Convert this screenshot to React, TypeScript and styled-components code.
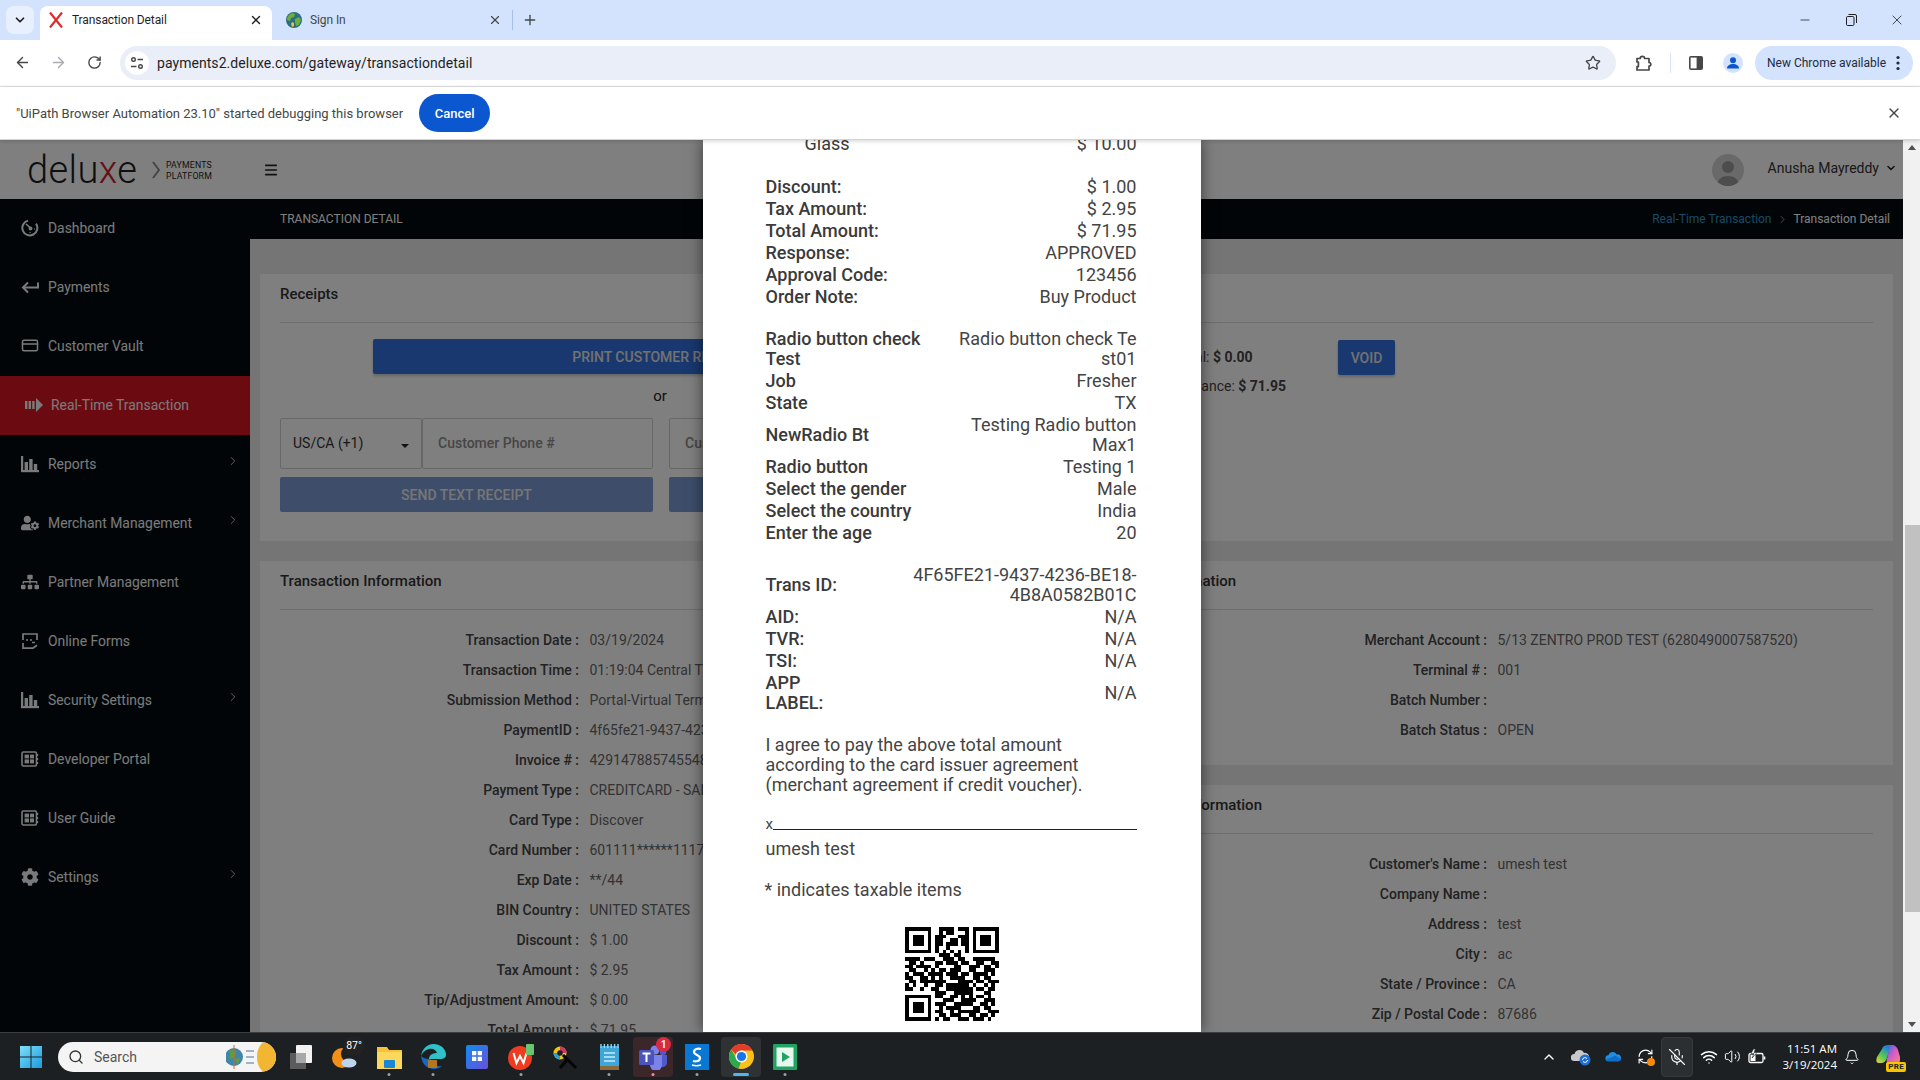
import React from "react";
import styled, { createGlobalStyle } from "styled-components";
import {
  ArrowLeft, ArrowRight, RotateCw, Star, X, Plus, ChevronDown, Minus, ChevronRight, ChevronUp,
  CreditCard, Search, Wifi, Volume2, Bell, MicOff, RefreshCw, Menu,
} from "lucide-react";
import { FaUserCog, FaSitemap, FaCog } from "react-icons/fa";

const Global = createGlobalStyle`
  html, body { margin: 0; padding: 0; overflow: hidden; background: #fff; }
  * { box-sizing: border-box; }
  body { font-family: Roboto, "Liberation Sans", sans-serif; }
`;

const Shell = styled.div`display:flex;flex-direction:column;width:1920px;height:1080px;overflow:hidden;`;

/* ---------- browser chrome ---------- */
const TabStrip = styled.div`display:flex;align-items:flex-end;height:40px;background:#d3e3fd;padding-left:6px;flex:none;`;
const TabMenu = styled.div`display:flex;align-items:center;justify-content:center;width:28px;height:28px;margin:0 6px 6px 0;border-radius:8px;background:#e9f0fd;color:#1f1f1f;`;
const Tab = styled.div<{ $active?: boolean; $w: number }>`
  display:flex;align-items:center;width:${p => p.$w}px;height:34px;border-radius:8px 8px 0 0;
  padding:${p => (p.$active ? "0 9px 6px 8px" : "0 10px 6px 14px")};
  background:${p => (p.$active ? "#fff" : "transparent")};color:${p => (p.$active ? "#1f1f1f" : "#444746")};
`;
const TabTitle = styled.span`flex:1;margin-left:8px;font-size:12px;letter-spacing:-.1px;white-space:nowrap;`;
const TabSep = styled.div`width:1px;height:20px;background:#a8c0e8;margin-bottom:10px;`;
const NewTab = styled.div`display:flex;margin:0 0 12px 9px;color:#444746;`;
const WinControls = styled.div`display:flex;margin-left:auto;align-self:flex-start;`;
const WinBtn = styled.div`display:flex;align-items:center;justify-content:center;width:46px;height:40px;color:#1f1f1f;`;

const Toolbar = styled.div`display:flex;align-items:center;height:47px;padding:0 0 1px 4px;background:#fff;border-bottom:1px solid #e0e0e0;flex:none;`;
const ToolBtn = styled.div<{ $ml?: number; $muted?: boolean }>`
  display:flex;align-items:center;justify-content:center;width:36px;height:34px;flex:none;
  margin-left:${p => p.$ml ?? 0}px;color:${p => (p.$muted ? "#a8abaf" : "#474747")};
`;
const Omnibox = styled.div`display:flex;align-items:center;width:1496px;height:34px;margin-left:8px;padding:0 15px 0 5px;border-radius:17px;background:#e9eef8;flex:none;`;
const SiteChip = styled.div`display:flex;align-items:center;justify-content:center;width:24px;height:24px;border-radius:50%;background:#fff;color:#474747;`;
const Url = styled.span`margin-left:8px;font-size:14px;color:#1f1f1f;letter-spacing:.05px;`;
const OmniStar = styled.div`display:flex;margin-left:auto;color:#474747;`;
const ToolSep = styled.div`width:1px;height:20px;margin-left:9px;background:#d3e3fd;flex:none;`;
const UpdatePill = styled.div`display:flex;align-items:center;width:158px;height:34px;margin-left:4px;padding-left:12px;border-radius:17px;background:#d3e3fd;color:#1c2b41;font-size:12px;flex:none;`;
const PillDots = styled.div`display:flex;margin-left:auto;margin-right:13px;color:#1c2b41;`;

const Infobar = styled.div`position:relative;z-index:2;display:flex;align-items:center;height:53px;padding:0 18px 0 16px;background:#fff;border-bottom:1px solid #d4d4d4;box-shadow:0 1px 4px rgba(0,0,0,.18);color:#444746;font-size:13px;flex:none;`;
const CancelBtn = styled.div`display:flex;align-items:center;justify-content:center;width:71px;height:38px;margin-left:16px;border-radius:19px;background:#0b57d0;color:#fff;font-size:13px;font-weight:500;`;
const InfoClose = styled.div`display:flex;margin-left:auto;color:#444746;`;

/* ---------- page ---------- */
const Viewport = styled.div`display:flex;flex:1;min-height:0;`;
const Page = styled.div`position:relative;flex:1;min-width:0;display:flex;flex-direction:column;overflow:hidden;background:#fff;`;
const Scrollbar = styled.div`display:flex;flex-direction:column;align-items:center;width:17px;background:#f1f1f1;flex:none;`;
const ScrollArrow = styled.div<{ $down?: boolean }>`
  width:0;height:0;margin:5px 0;border-left:4px solid transparent;border-right:4px solid transparent;
  ${p => (p.$down ? "border-top:5px solid #505050;" : "border-bottom:5px solid #505050;")}
`;
const ScrollGap = styled.div`flex:1;width:100%;display:flex;flex-direction:column;justify-content:flex-end;padding-bottom:105px;align-items:flex-end;`;
const ScrollThumb = styled.div`width:15px;height:387px;background:#c1c1c1;`;

const Header = styled.div`display:flex;align-items:center;height:59px;padding:0 6px 0 27px;background:#fff;flex:none;`;
const LogoBlock = styled.div`display:flex;align-items:center;width:236px;flex:none;`;
const LogoText = styled.span`font-size:38px;font-weight:300;line-height:1;color:#1f1f1f;letter-spacing:.4px;width:111px;`;
const LogoX = styled.span`color:#c9202a;`;
const LogoChevron = styled.svg`margin-left:14px;flex:none;`;
const LogoSub = styled.div`margin-left:6px;font-size:9.5px;line-height:11px;color:#1f1f1f;letter-spacing:.2px;transform:scaleX(.92);transform-origin:left;`;
const Burger = styled.div`display:flex;color:#222;`;
const Avatar = styled.div`display:flex;align-items:flex-end;justify-content:center;width:32px;height:32px;margin-left:auto;border-radius:50%;background:#d3d3d3;color:#9a9a9a;overflow:hidden;`;
const UserName = styled.span`margin:0 0 3px 24px;font-size:14px;color:#333;`;
const UserCaret = styled.div`display:flex;margin:0 0 3px 6px;color:#222;`;

const Body = styled.div`display:flex;flex:1;min-height:0;`;
const Sidebar = styled.div`width:250px;background:#020a0e;flex:none;`;
const NavItem = styled.div<{ $active?: boolean }>`
  display:flex;align-items:center;height:59px;gap:${p => (p.$active ? 8 : 9)}px;
  padding:0 10px 2px ${p => (p.$active ? 25 : 21)}px;
  background:${p => (p.$active ? "#d81424" : "transparent")};color:#f5f5f5;font-size:13.9px;
`;
const NavIcon = styled.span`display:flex;align-items:center;justify-content:center;width:18px;height:18px;flex:none;`;
const NavArrow = styled.span`display:flex;margin-left:auto;margin-bottom:6px;`;

const Main = styled.div`flex:1;min-width:0;display:flex;flex-direction:column;`;
const SubBar = styled.div`display:flex;align-items:center;justify-content:space-between;height:40px;padding:0 13px 0 30px;background:#020a0e;color:#fff;font-size:12px;flex:none;`;
const SubTitle = styled.span`font-weight:400;`;
const Crumbs = styled.div`display:flex;align-items:center;gap:4.5px;`;
const CrumbLink = styled.span`color:#3394cc;`;
const CrumbArrow = styled.span`display:flex;color:#c8c8c8;`;
const Content = styled.div`flex:1;min-height:0;overflow:hidden;padding:35px 10px 0;background:#ebebeb;`;
const Panel = styled.section<{ $h?: number }>`background:#fff;${p => (p.$h ? `height:${p.$h}px;` : "")}`;
const PanelTitle = styled.h3`display:flex;align-items:center;height:49px;margin:0 20px;padding-bottom:9px;border-bottom:1px solid #dcdcdc;font-size:15px;font-weight:500;color:#333;white-space:nowrap;`;
const ReceiptBody = styled.div`display:flex;padding:0 20px;`;
const ReceiptLeft = styled.div`display:flex;flex-direction:column;align-items:center;width:760px;padding-top:16px;flex:none;`;
const PrintBtn = styled.div<{ $w: number }>`
  display:flex;align-items:center;justify-content:center;width:${p => p.$w}px;height:35px;border-radius:2px;
  background:#3070de;color:#e4e4e4;font-size:14px;font-weight:500;box-shadow:0 2px 3px rgba(0,0,0,.2);flex:none;
`;
const OrText = styled.div`height:44px;line-height:44px;font-size:15px;color:#222;`;
const FormGrid = styled.div`display:grid;grid-template-columns:373px 371px;column-gap:16px;row-gap:8px;width:100%;`;
const Phone = styled.div`display:flex;height:51px;`;
const CountrySelect = styled.div`display:flex;align-items:center;justify-content:space-between;width:142px;padding:0 12px 2px 12px;border:1px solid #cfcfcf;border-radius:2px;font-size:14px;color:#333;flex:none;`;
const Caret = styled.span`width:0;height:0;margin-top:7px;border-left:4px solid transparent;border-right:4px solid transparent;border-top:4px solid #222;`;
const TextField = styled.input`flex:1;min-width:0;width:100%;height:51px;padding:0 15px 2px;border:1px solid #cfcfcf;border-radius:2px;background:transparent;font:500 14px Roboto,sans-serif;outline:none;&::placeholder{color:#8c8c8c;opacity:1;}`;
const SendBtn = styled.div`display:flex;align-items:center;justify-content:center;height:35px;border-radius:2px;background:#7b9bd4;color:#ececec;font-size:14px;font-weight:500;`;
const Amounts = styled.div`display:flex;flex-direction:column;gap:9px;width:226px;margin-left:72px;padding-top:24px;flex:none;font-size:14px;color:#444;white-space:nowrap;`;
const AmountRow = styled.div`height:20px;line-height:20px;`;
const VoidBtn = styled(PrintBtn)`margin-top:17px;`;

const Columns = styled.div`display:flex;align-items:flex-start;gap:4px;margin-top:20px;`;
const LeftPanel = styled(Panel)`width:806px;flex:none;height:600px;`;
const RightStack = styled.div`display:flex;flex-direction:column;gap:20px;flex:1;min-width:0;`;
const RightPanel = styled(Panel)`padding-bottom:20px;`;
const Rows = styled.div<{ $label: number }>`
  display:grid;grid-template-columns:${p => p.$label}px 1fr;column-gap:10.5px;grid-auto-rows:30px;
  padding:15px 20px 0;align-items:center;font-size:14px;white-space:nowrap;
`;
const Lbl = styled.div`text-align:right;font-weight:500;color:#444;`;
const Val = styled.div`color:#666;`;

const Backdrop = styled.div`position:absolute;inset:0;display:flex;justify-content:center;background:rgba(0,0,0,.5);z-index:1;`;
const Modal = styled.div`width:498px;height:100%;padding:0 64px 0 63px;overflow:hidden;background:#fff;box-shadow:0 0 14px rgba(0,0,0,.55);color:#3c3c3c;font-size:18px;line-height:20px;`;
const ReceiptTable = styled.div<{ $mt?: number }>`
  display:grid;grid-template-columns:1fr auto;align-items:center;row-gap:2px;margin-top:${p => p.$mt ?? 0}px;
`;
const RLabel = styled.div<{ $indent?: boolean }>`font-weight:500;color:#3a3a3a;white-space:nowrap;${p => (p.$indent ? "padding-left:39px;font-weight:400;" : "")}`;
const RValue = styled.div`text-align:right;color:#444;white-space:nowrap;`;
const Agree = styled.div`margin-top:22px;color:#444;white-space:nowrap;`;
const SignLine = styled.div`display:flex;align-items:flex-end;height:20px;margin-top:16px;font-size:15px;line-height:13px;color:#444;`;
const SignRule = styled.span`flex:1;height:1px;margin-bottom:1px;background:#222;`;
const Signer = styled.div`margin-top:8px;color:#444;`;
const Taxable = styled.div`margin-top:21px;margin-left:-1px;color:#444;`;
const QrWrap = styled.div`display:flex;justify-content:center;margin-top:27px;padding-left:2px;`;

/* ---------- taskbar ---------- */
const Taskbar = styled.div`display:flex;align-items:center;height:48px;padding:0 14px 0 9px;background:#1c2022;border-top:1px solid #3b3f42;flex:none;`;
const TaskCell = styled.div<{ $bg?: string }>`
  position:relative;display:flex;align-items:center;justify-content:center;width:40px;height:40px;margin:0 2px;
  border-radius:4px;background:${p => p.$bg ?? "transparent"};flex:none;
`;
const TaskDot = styled.span<{ $color?: string; $wide?: boolean }>`
  position:absolute;left:50%;bottom:1px;transform:translateX(-50%);height:3px;border-radius:2px;
  width:${p => (p.$wide ? 16 : 3)}px;background:${p => p.$color ?? "#9aa0a6"};
`;
const SearchBox = styled.div`display:flex;align-items:center;width:218px;height:30px;margin:0 3px 0 5px;padding-left:10px;border-radius:15px;background:#f4f4f4;color:#333;font-size:14px;flex:none;overflow:hidden;`;
const SearchText = styled.span`margin-left:10px;color:#555;`;
const SearchArt = styled.svg`margin-left:auto;flex:none;`;
const WeatherBadge = styled.span`position:absolute;top:-1px;right:0;width:22px;height:20px;border-radius:10px;background:#222;color:#fff;font-size:10.5px;line-height:20px;text-align:center;`;
const TeamsBadge = styled.span`position:absolute;top:0;right:2px;width:15px;height:15px;border-radius:50%;background:#d92b40;color:#fff;font-size:10px;font-weight:700;line-height:15px;text-align:center;`;
const Tray = styled.div`display:flex;align-items:center;margin-left:auto;color:#fff;`;
const TrayCell = styled.div<{ $w: number; $box?: boolean; $ml?: number }>`
  position:relative;display:flex;align-items:center;justify-content:center;width:${p => p.$w}px;height:40px;flex:none;
  margin-left:${p => p.$ml ?? 0}px;
  ${p => (p.$box ? "background:#2b2f31;border:1px solid #363a3c;border-radius:4px;" : "")}
  svg { flex:none; }
`;
const SyncDot = styled.span`position:absolute;right:6px;bottom:11px;width:8px;height:8px;border-radius:50%;background:#f7890c;`;
const Clock = styled.div`width:62px;text-align:right;font-family:"Open Sans",Roboto,sans-serif;font-size:11.5px;line-height:16px;color:#fff;white-space:nowrap;`;
const CopilotBadge = styled.span`position:absolute;right:0;bottom:5px;padding:0 2px;border-radius:2px;background:#f7c600;color:#222;font-size:8px;font-weight:700;line-height:10px;letter-spacing:.3px;`;

/* ---------- drawings ---------- */
const RedX = () => (
  <svg width="16" height="16" viewBox="0 0 16 16" fill="none" stroke="#e02b2b" strokeWidth="2.2"><path d="M2 0.5 14 15.5M14 0.5 2 15.5" /></svg>
);
const Globe = () => (
  <svg width="16" height="16" viewBox="0 0 16 16">
    <circle cx="8" cy="8" r="8" fill="#2c6e7f" />
    <path d="M3 3c2-2 5-2 6-1L8 5 5 6 4 9 1 8c0-2 1-4 2-5ZM9 7l4-2 2 3-2 5-3 1-1-4Z" fill="#6fae3c" />
    <path d="M6 10l2 1v3l-2 1-1-3Z" fill="#e2c14a" />
  </svg>
);
const Tune = () => (
  <svg width="14" height="14" viewBox="0 0 14 14" fill="none" stroke="currentColor" strokeWidth="1.4">
    <circle cx="3.5" cy="3.5" r="1.8" /><path d="M7.5 3.5H13M1 10.5h5.5" /><circle cx="10.5" cy="10.5" r="1.8" />
  </svg>
);
const PuzzleIcon = () => (
  <svg width="18" height="18" viewBox="0 0 18 18" fill="none" stroke="currentColor" strokeWidth="1.7" strokeLinejoin="round">
    <path d="M3 4.5h3.2a2.2 2.2 0 0 1 4.4 0H15v4a1.8 1.8 0 0 1 0 3.6V16H3v-3.4h1.4V8H3Z" />
  </svg>
);
const SidePanel = () => (
  <svg width="16" height="16" viewBox="0 0 16 16"><rect x="1" y="1" width="14" height="14" rx="2" fill="#474747" /><rect x="2.6" y="2.6" width="6" height="10.8" fill="#fff" /></svg>
);
const Profile = () => (
  <svg width="20" height="20" viewBox="0 0 20 20"><circle cx="10" cy="10" r="10" fill="#d3e3fd" /><circle cx="10" cy="7.2" r="3" fill="#0b57d0" /><path d="M4 15.5c0-3 2.8-4.5 6-4.5s6 1.5 6 4.5Z" fill="#0b57d0" /></svg>
);
const Dots = () => (
  <svg width="4" height="16" viewBox="0 0 4 16" fill="currentColor"><circle cx="2" cy="2.5" r="1.6" /><circle cx="2" cy="8" r="1.6" /><circle cx="2" cy="13.5" r="1.6" /></svg>
);
const Restore = () => (
  <svg width="11" height="12" viewBox="0 0 11 12" fill="none" stroke="currentColor"><rect x=".5" y="2.5" width="7.5" height="9" rx="1.2" /><path d="M2.5 .5H9a1.5 1.5 0 0 1 1.5 1.5v7" /></svg>
);
const UserSil = () => (
  <svg width="24" height="28" viewBox="0 0 24 28" fill="currentColor"><circle cx="12" cy="9" r="6" /><path d="M1 28c0-7 5-10 11-10s11 3 11 10Z" /></svg>
);

const IcoDash = () => (
  <svg width="18" height="18" viewBox="0 0 18 18" fill="none" stroke="currentColor" strokeWidth="2"><path d="M7 1.6A7.5 7.5 0 1 0 15 4.6" /><path d="M5 5l4.5 4" strokeWidth="1.6" /><circle cx="9.5" cy="9.5" r="1" fill="currentColor" /><path d="M9 13v1M13 10h1" strokeWidth="1.2" /></svg>
);
const IcoPay = () => (
  <svg width="18" height="18" viewBox="0 0 18 18" fill="none" stroke="currentColor" strokeWidth="2"><path d="M17 4.5V9.5H3" /><path d="M7 4.5 2 9.5l5 5" /></svg>
);
const IcoRealtime = () => (
  <svg width="18" height="14" viewBox="0 0 18 14" fill="currentColor"><rect x="0" y="3" width="2.4" height="8" /><rect x="3.6" y="3" width="2.4" height="8" /><rect x="7.2" y="3" width="2.4" height="8" /><path d="M11 0 18 7l-7 7Z" /></svg>
);
const IcoBars = () => (
  <svg width="18" height="18" viewBox="0 0 18 18" fill="currentColor"><rect x="0" y="1" width="2.2" height="16" /><rect x="0" y="15" width="18" height="2.2" /><rect x="3.6" y="7" width="3.4" height="9" /><rect x="8.2" y="4" width="3.4" height="12" /><rect x="12.8" y="9" width="3.4" height="7" /></svg>
);
const IcoForms = () => (
  <svg width="18" height="18" viewBox="0 0 18 18" fill="none" stroke="currentColor" strokeWidth="1.7"><path d="M2 8V2h14v6M2 11v5.2h10l4-3" /><path d="M5 8h2M9 8h2M11 10.5h3" /></svg>
);
const IcoDev = () => (
  <svg width="18" height="16" viewBox="0 0 18 16" fill="none" stroke="currentColor"><rect x="1" y="1" width="14.5" height="14" rx="1.5" strokeWidth="1.6" /><rect x="3.6" y="3.6" width="4.4" height="3.8" fill="currentColor" stroke="none" /><rect x="9" y="3.6" width="4" height="3.8" fill="currentColor" stroke="none" /><rect x="3.6" y="8.4" width="4.4" height="4" fill="currentColor" stroke="none" /><rect x="9" y="8.4" width="4" height="4" fill="currentColor" stroke="none" /><path d="M16.5 3v2M16.5 7v2M16.5 11v2" strokeWidth="1.4" /></svg>
);

const WinLogo = () => (
  <svg width="24" height="24" viewBox="0 0 24 24">
    <defs><linearGradient id="wl" x1="0" y1="0" x2="1" y2="1"><stop offset="0" stopColor="#7fe0f7" /><stop offset="1" stopColor="#1a9ae0" /></linearGradient></defs>
    <path d="M1 1h10.5v10.5H1zM12.5 1H23v10.5H12.5zM1 12.5h10.5V23H1zM12.5 12.5H23V23H12.5z" fill="url(#wl)" />
  </svg>
);
const TaskView = () => (
  <svg width="26" height="24" viewBox="0 0 26 24"><rect x="2" y="8" width="16" height="16" fill="#5c5c5c" /><rect x="8" y="0" width="16" height="18" rx="1" fill="#f2f2f2" /><rect x="8" y="8" width="10" height="10" fill="#a8a8a8" /></svg>
);
const Weather = () => (
  <svg width="30" height="30" viewBox="0 0 30 30"><circle cx="12" cy="16" r="10" fill="#f39019" /><circle cx="19" cy="12" r="8" fill="#1c2022" /><ellipse cx="19" cy="21" rx="7.5" ry="4.5" fill="#bcd4ee" /></svg>
);
const Explorer = () => (
  <svg width="25" height="24" viewBox="0 0 25 24"><path d="M0 2h10l2 3h13v19H0Z" fill="#f6c338" /><rect x="0" y="7" width="25" height="17" fill="#fbd75c" /><rect x="7" y="15" width="11" height="8" rx="1" fill="#1b86d8" /></svg>
);
const Edge = () => (
  <svg width="25" height="25" viewBox="0 0 25 25">
    <path d="M12.5 0C20 0 25 5 25 11c0 3-3 4-6 4H8c0-4 4-6 8-6-1-3-4-5-8-4-4 1-7 4-8 7C1 5 6 0 12.5 0Z" fill="#2fc0c9" />
    <path d="M0 12c1 8 6 13 13 13 3 0 6-1 8-3-6 1-11-2-11-7H8C5 15 2 14 0 12Z" fill="#1768c4" />
    <rect x="7" y="16" width="9" height="8" rx="1" fill="#b4761f" />
  </svg>
);
const StoreTile = () => (
  <svg width="22" height="24" viewBox="0 0 22 24"><defs><linearGradient id="st" x1="0" y1="0" x2="1" y2="1"><stop offset="0" stopColor="#0f8cf0" /><stop offset="1" stopColor="#6b4fd8" /></linearGradient></defs><rect width="22" height="24" rx="2" fill="url(#st)" /><path d="M6 6h4.3v4.3H6zM11.7 6H16v4.3h-4.3zM6 11.7h4.3V16H6zM11.7 11.7H16V16h-4.3z" fill="#fff" /></svg>
);
const Wps = () => (
  <svg width="26" height="26" viewBox="0 0 26 26"><circle cx="12" cy="14" r="12" fill="#ef3b1f" /><path d="M5.5 9l3 10 3.5-7 3.5 7 3-10" fill="none" stroke="#fff" strokeWidth="2" /><rect x="18" y="0" width="8" height="11" rx="1" fill="#69c56f" /></svg>
);
const Picker = () => (
  <svg width="26" height="26" viewBox="0 0 26 26"><circle cx="8" cy="9" r="6.5" fill="#f0c419" /><path d="M8 2.5A6.5 6.5 0 0 1 14.5 9H8Z" fill="#d6336c" /><path d="M1.5 9A6.5 6.5 0 0 0 8 15.5V9Z" fill="#2b9fd8" /><circle cx="8" cy="9" r="2.8" fill="#1c2022" /><path d="M11 11 24 24M8 24l8-9" stroke="#050505" strokeWidth="3" /></svg>
);
const Notepad = () => (
  <svg width="19" height="26" viewBox="0 0 19 26"><rect y="2" width="19" height="24" rx="2" fill="#3fa7d8" /><path d="M1 0v4M4.4 0v4M7.8 0v4M11.2 0v4M14.6 0v4M18 0v4" stroke="#9bd4ee" strokeWidth="1.4" /><path d="M4 9h11M4 13h11M4 17h11" stroke="#c9ecfb" strokeWidth="1.5" /><rect y="22" width="19" height="4" fill="#8b6a3e" /></svg>
);
const Teams = () => (
  <svg width="30" height="26" viewBox="0 0 30 26"><circle cx="17" cy="6" r="4.5" fill="#7b83eb" /><circle cx="25" cy="8" r="3.2" fill="#5059c9" /><path d="M20 11h9v8a5 5 0 0 1-9 2Z" fill="#5059c9" /><path d="M9 11h15v10a6 6 0 0 1-12 0Z" fill="#7b83eb" /><rect x="1" y="6" width="15" height="15" rx="1.5" fill="#4b53bc" /><path d="M4.5 9.5h8M8.5 9.5V18" stroke="#fff" strokeWidth="2" /></svg>
);
const BlueS = () => (
  <svg width="24" height="26" viewBox="0 0 24 26"><rect width="24" height="26" fill="#0a77d2" /><path d="M16 5c-3-1-7 0-7 3s6 3 6 6-4 4-7 3" fill="none" stroke="#fff" strokeWidth="2.3" /><path d="M7 21c3 1 6 1 9 0" stroke="#fff" strokeWidth="1.6" fill="none" /></svg>
);
const Chrome = () => (
  <svg width="25" height="25" viewBox="0 0 25 25"><circle cx="12.5" cy="12.5" r="12.5" fill="#fbc116" /><path d="M12.5 0A12.5 12.5 0 0 1 23.4 6.4H12.5A6 6 0 0 0 6.8 10.5L2.2 5.4A12.5 12.5 0 0 1 12.5 0Z" fill="#e33b2e" /><path d="M2.2 5.4 8 15.5A6 6 0 0 0 12 18.5L9.4 24.6A12.5 12.5 0 0 1 2.2 5.4Z" fill="#2da94f" /><circle cx="12.5" cy="12.5" r="6" fill="#fff" /><circle cx="12.5" cy="12.5" r="4.6" fill="#1a73e8" /></svg>
);
const GreenPlay = () => (
  <svg width="24" height="26" viewBox="0 0 24 26"><rect width="24" height="26" rx="1" fill="#1fa463" /><rect x="3.5" y="3.5" width="17" height="19" fill="#e9f8ef" /><path d="M9 8l8 5-8 5Z" fill="#1fa463" /></svg>
);
const CloudSync = () => (
  <svg width="20" height="18" viewBox="0 0 20 18"><path d="M3 13a3.5 3.5 0 0 1 .5-7 5 5 0 0 1 9.5-1 4 4 0 0 1 2 8Z" fill="#c9c9c9" /><circle cx="14" cy="12" r="5.5" fill="#1f6fd6" /><path d="M11.5 12a2.5 2.5 0 0 1 4.5-1.4M16.5 12a2.5 2.5 0 0 1-4.5 1.4" stroke="#fff" fill="none" /></svg>
);
const OneDrive = () => (
  <svg width="17" height="11" viewBox="0 0 24 16"><path d="M5 15a4.5 4.5 0 0 1-.5-9A6.5 6.5 0 0 1 16.5 5 5 5 0 0 1 19 15Z" fill="#1f8fe6" /><path d="M9 9.5 14 6.5l9 5A4 4 0 0 1 19 15H5a4 4 0 0 1-3.8-3Z" fill="#0f6cc8" /></svg>
);
const BatteryIcon = () => (
  <svg width="18" height="16" viewBox="0 0 18 16" fill="none" stroke="currentColor" strokeWidth="1.3"><rect x="1" y="4.5" width="14" height="9" rx="1.5" /><path d="M16.5 7.5v3" strokeWidth="1.6" /><path d="M2.5 6h5v6h-5Z" fill="currentColor" stroke="none" /><path d="M5.5 0 3 4.5h3L4 9l5-5.5H6L7.5 0Z" fill="currentColor" stroke="#1c2022" strokeWidth=".6" /></svg>
);
const Copilot = () => (
  <svg width="24" height="24" viewBox="0 0 24 24"><defs><linearGradient id="cpA" x1="0" y1="1" x2=".6" y2="0"><stop offset="0" stopColor="#f4d33a" /><stop offset=".45" stopColor="#5dc94f" /><stop offset="1" stopColor="#1b7fe0" /></linearGradient><linearGradient id="cpB" x1="0" y1="0" x2="1" y2="1"><stop offset="0" stopColor="#3d6be0" /><stop offset=".5" stopColor="#d95cc6" /><stop offset="1" stopColor="#f58a6a" /></linearGradient></defs><path d="M6 4c1-3 3-4 6-4h3l-4 13c-1 3-3 5-6 5H3C0 18 0 15 1 12Z" fill="url(#cpA)" /><path d="M14 0h2c3 0 5 2 6 5l2 7c1 4-1 7-4 7h-6c-3 0-4-2-3-5Z" fill="url(#cpB)" /></svg>
);

const QR_ROWS = [
  "1111111001111011101111111", "1000001001011000101000001", "1011101011100011101011101",
  "1011101011001101101011101", "1011101011011101101011101", "1000001010010000101000001",
  "1111111010101010101111111", "0000000001110110000000000", "1111011100111011001111110",
  "0110100011011101100110011", "1101111010000110011101101", "0110010101101110011001110",
  "1011101111011101101111010", "1100110101001111001101100", "0110111111100011110110111",
  "1010010011011111101001010", "1100100110011111110110110", "0000000011100111110001100",
  "1111111011001101010110100", "1000001000111001111001110", "1011101011100111110011010",
  "1011101001011110001101100", "1011101011001011111100111", "1000001001101110011011010",
  "1111111010110011101110100",
];
const Qr = () => (
  <svg width="94" height="94" viewBox="0 0 25 25" shapeRendering="crispEdges">
    {QR_ROWS.map((row, y) =>
      row.split("").map((c, x) => (c === "1" ? <rect key={`${x}-${y}`} x={x} y={y} width="1" height="1" fill="#000" /> : null)),
    )}
  </svg>
);

/* ---------- data ---------- */
const NAV = [
  { t: "Dashboard", i: <IcoDash /> },
  { t: "Payments", i: <IcoPay /> },
  { t: "Customer Vault", i: <CreditCard size={19} strokeWidth={2} /> },
  { t: "Real-Time Transaction", i: <IcoRealtime />, active: true },
  { t: "Reports", i: <IcoBars />, more: true },
  { t: "Merchant Management", i: <FaUserCog size={20} />, more: true },
  { t: "Partner Management", i: <FaSitemap size={20} /> },
  { t: "Online Forms", i: <IcoForms /> },
  { t: "Security Settings", i: <IcoBars />, more: true },
  { t: "Developer Portal", i: <IcoDev /> },
  { t: "User Guide", i: <IcoDev /> },
  { t: "Settings", i: <FaCog size={18} />, more: true },
];
const TX_ROWS = [
  ["Transaction Date :", "03/19/2024"],
  ["Transaction Time :", "01:19:04 Central Time"],
  ["Submission Method :", "Portal-Virtual Terminal"],
  ["PaymentID :", "4f65fe21-9437-4236-be18"],
  ["Invoice # :", "429147885745548"],
  ["Payment Type :", "CREDITCARD - SALE"],
  ["Card Type :", "Discover"],
  ["Card Number :", "601111******1117"],
  ["Exp Date :", "**/44"],
  ["BIN Country :", "UNITED STATES"],
  ["Discount :", "$ 1.00"],
  ["Tax Amount :", "$ 2.95"],
  ["Tip/Adjustment Amount:", "$ 0.00"],
  ["Total Amount :", "$ 71.95"],
];
const MERCHANT_ROWS = [
  ["Merchant Account :", "5/13 ZENTRO PROD TEST (6280490007587520)"],
  ["Terminal # :", "001"],
  ["Batch Number :", ""],
  ["Batch Status :", "OPEN"],
];
const CUSTOMER_ROWS = [
  ["Customer's Name :", "umesh test"],
  ["Company Name :", ""],
  ["Address :", "test"],
  ["City :", "ac"],
  ["State / Province :", "CA"],
  ["Zip / Postal Code :", "87686"],
];
type RR = [React.ReactNode, React.ReactNode];
const R1: RR[] = [["Discount:", "$ 1.00"], ["Tax Amount:", "$ 2.95"], ["Total Amount:", "$ 71.95"], ["Response:", "APPROVED"], ["Approval Code:", "123456"], ["Order Note:", "Buy Product"]];
const R2: RR[] = [
  [<>Radio button check<br />Test</>, <>Radio button check Te<br />st01</>],
  ["Job", "Fresher"], ["State", "TX"],
  ["NewRadio Bt", <>Testing Radio button<br />Max1</>],
  ["Radio button", "Testing 1"], ["Select the gender", "Male"], ["Select the country", "India"], ["Enter the age", "20"],
];
const R3: RR[] = [
  ["Trans ID:", <>4F65FE21-9437-4236-BE18-<br />4B8A0582B01C</>],
  ["AID:", "N/A"], ["TVR:", "N/A"], ["TSI:", "N/A"],
  [<>APP<br />LABEL:</>, "N/A"],
];
const RTable = ({ rows, mt }: { rows: RR[]; mt?: number }) => (
  <ReceiptTable $mt={mt}>
    {rows.map((r, i) => (
      <React.Fragment key={i}><RLabel>{r[0]}</RLabel><RValue>{r[1]}</RValue></React.Fragment>
    ))}
  </ReceiptTable>
);
const DataRows = ({ rows, label }: { rows: string[][]; label: number }) => (
  <Rows $label={label}>
    {rows.map(r => (
      <React.Fragment key={r[0]}><Lbl>{r[0]}</Lbl><Val>{r[1]}</Val></React.Fragment>
    ))}
  </Rows>
);

export default function App() {
  return (
    <Shell>
      <Global />
      <TabStrip>
        <TabMenu><ChevronDown size={14} strokeWidth={3} /></TabMenu>
        <Tab $active $w={232}><RedX /><TabTitle>Transaction Detail</TabTitle><X size={14} strokeWidth={2.4} /></Tab>
        <Tab $w={240}><Globe /><TabTitle>Sign In</TabTitle><X size={14} strokeWidth={2} /></Tab>
        <TabSep />
        <NewTab><Plus size={16} strokeWidth={2} /></NewTab>
        <WinControls>
          <WinBtn><Minus size={14} strokeWidth={1.3} /></WinBtn>
          <WinBtn><Restore /></WinBtn>
          <WinBtn><X size={16} strokeWidth={1.2} /></WinBtn>
        </WinControls>
      </TabStrip>
      <Toolbar>
        <ToolBtn><ArrowLeft size={17} strokeWidth={2} /></ToolBtn>
        <ToolBtn $muted><ArrowRight size={17} strokeWidth={2} /></ToolBtn>
        <ToolBtn><RotateCw size={15} strokeWidth={2.2} /></ToolBtn>
        <Omnibox>
          <SiteChip><Tune /></SiteChip>
          <Url>payments2.deluxe.com/gateway/transactiondetail</Url>
          <OmniStar><Star size={16} strokeWidth={2} /></OmniStar>
        </Omnibox>
        <ToolBtn $ml={9}><PuzzleIcon /></ToolBtn>
        <ToolSep />
        <ToolBtn $ml={7}><SidePanel /></ToolBtn>
        <ToolBtn $ml={1}><Profile /></ToolBtn>
        <UpdatePill>New Chrome available<PillDots><Dots /></PillDots></UpdatePill>
      </Toolbar>
      <Infobar>
        <span>"UiPath Browser Automation 23.10" started debugging this browser</span>
        <CancelBtn>Cancel</CancelBtn>
        <InfoClose><X size={16} strokeWidth={2} /></InfoClose>
      </Infobar>

      <Viewport>
        <Page>
          <Header>
            <LogoBlock>
              <LogoText>delu<LogoX>x</LogoX>e</LogoText>
              <LogoChevron width="8" height="18" viewBox="0 0 8 18" fill="none" stroke="#8a8a8a" strokeWidth="2"><path d="M1 1l6 8-6 8" /></LogoChevron>
              <LogoSub>PAYMENTS<br />PLATFORM</LogoSub>
            </LogoBlock>
            <Burger><Menu size={16} strokeWidth={2.4} /></Burger>
            <Avatar><UserSil /></Avatar>
            <UserName>Anusha Mayreddy</UserName>
            <UserCaret><ChevronDown size={12} strokeWidth={3} /></UserCaret>
          </Header>
          <Body>
            <Sidebar>
              {NAV.map(n => (
                <NavItem key={n.t} $active={n.active}>
                  <NavIcon>{n.i}</NavIcon>
                  <span>{n.t}</span>
                  {n.more && <NavArrow><ChevronRight size={14} strokeWidth={1.3} /></NavArrow>}
                </NavItem>
              ))}
            </Sidebar>
            <Main>
              <SubBar>
                <SubTitle>TRANSACTION DETAIL</SubTitle>
                <Crumbs>
                  <CrumbLink>Real-Time Transaction</CrumbLink>
                  <CrumbArrow><ChevronRight size={13} strokeWidth={1.3} /></CrumbArrow>
                  <span>Transaction Detail</span>
                </Crumbs>
              </SubBar>
              <Content>
                <Panel $h={267}>
                  <PanelTitle>Receipts</PanelTitle>
                  <ReceiptBody>
                    <ReceiptLeft>
                      <PrintBtn $w={574}>PRINT CUSTOMER RECEIPT</PrintBtn>
                      <OrText>or</OrText>
                      <FormGrid>
                        <Phone>
                          <CountrySelect>US/CA (+1)<Caret /></CountrySelect>
                          <TextField readOnly placeholder="Customer Phone #" />
                        </Phone>
                        <TextField readOnly placeholder="Customer Email" />
                        <SendBtn>SEND TEXT RECEIPT</SendBtn>
                        <SendBtn>SEND EMAIL RECEIPT</SendBtn>
                      </FormGrid>
                    </ReceiptLeft>
                    <Amounts>
                      <AmountRow>Refunded Total: <b>$ 0.00</b></AmountRow>
                      <AmountRow>Remaining Balance: <b>$ 71.95</b></AmountRow>
                    </Amounts>
                    <VoidBtn $w={57}>VOID</VoidBtn>
                  </ReceiptBody>
                </Panel>
                <Columns>
                  <LeftPanel>
                    <PanelTitle>Transaction Information</PanelTitle>
                    <DataRows rows={TX_ROWS} label={299} />
                  </LeftPanel>
                  <RightStack>
                    <RightPanel>
                      <PanelTitle>Merchant Information</PanelTitle>
                      <DataRows rows={MERCHANT_ROWS} label={397} />
                    </RightPanel>
                    <RightPanel>
                      <PanelTitle>Card Holder's Information</PanelTitle>
                      <DataRows rows={CUSTOMER_ROWS} label={397} />
                    </RightPanel>
                  </RightStack>
                </Columns>
              </Content>
            </Main>
          </Body>
          <Backdrop>
            <Modal>
              <ReceiptTable $mt={-6}>
                <RLabel $indent>Glass</RLabel><RValue>$ 10.00</RValue>
              </ReceiptTable>
              <RTable rows={R1} mt={23} />
              <RTable rows={R2} mt={22} />
              <RTable rows={R3} mt={22} />
              <Agree>I agree to pay the above total amount<br />according to the card issuer agreement<br />(merchant agreement if credit voucher).</Agree>
              <SignLine>x<SignRule /></SignLine>
              <Signer>umesh test</Signer>
              <Taxable>* indicates taxable items</Taxable>
              <QrWrap><Qr /></QrWrap>
            </Modal>
          </Backdrop>
        </Page>
        <Scrollbar>
          <ScrollArrow />
          <ScrollGap><ScrollThumb /></ScrollGap>
          <ScrollArrow $down />
        </Scrollbar>
      </Viewport>

      <Taskbar>
        <TaskCell><WinLogo /></TaskCell>
        <SearchBox>
          <Search size={16} strokeWidth={2} />
          <SearchText>Search</SearchText>
          <SearchArt width="50" height="30" viewBox="0 0 50 30">
            <circle cx="8" cy="15" r="9" fill="#3f86a8" /><path d="M4 8l6 1-1 6-5 2ZM9 17l5-1-2 7Z" fill="#5e9e3c" /><path d="M8 3v24" stroke="#e0632b" />
            <path d="M20 9h8M20 15h8M20 21h8" stroke="#9fb4c8" strokeWidth="2" />
            <path d="M38 0a15 15 0 0 1 0 30c-5-3-7-9-7-15s2-12 7-15Z" fill="#f2b632" />
          </SearchArt>
        </SearchBox>
        <TaskCell><TaskView /></TaskCell>
        <TaskCell><Weather /><WeatherBadge>87°</WeatherBadge></TaskCell>
        <TaskCell><Explorer /><TaskDot /></TaskCell>
        <TaskCell><Edge /><TaskDot /></TaskCell>
        <TaskCell><StoreTile /></TaskCell>
        <TaskCell><Wps /><TaskDot /></TaskCell>
        <TaskCell><Picker /></TaskCell>
        <TaskCell><Notepad /><TaskDot /></TaskCell>
        <TaskCell $bg="#3b2729"><Teams /><TeamsBadge>1</TeamsBadge><TaskDot $color="#f28b96" /></TaskCell>
        <TaskCell><BlueS /><TaskDot /></TaskCell>
        <TaskCell $bg="#2e3234"><Chrome /><TaskDot $wide $color="#4fb6f2" /></TaskCell>
        <TaskCell><GreenPlay /><TaskDot /></TaskCell>
        <Tray>
          <TrayCell $w={32}><ChevronUp size={16} strokeWidth={2} /></TrayCell>
          <TrayCell $w={32}><CloudSync /></TrayCell>
          <TrayCell $w={32}><OneDrive /></TrayCell>
          <TrayCell $w={32}><RefreshCw size={17} strokeWidth={1.6} /><SyncDot /></TrayCell>
          <TrayCell $w={32} $box><MicOff size={18} strokeWidth={1.5} /></TrayCell>
          <TrayCell $w={32}><Wifi size={18} strokeWidth={2} /></TrayCell>
          <TrayCell $w={14}><Volume2 size={17} strokeWidth={1.4} /></TrayCell>
          <TrayCell $w={36}><BatteryIcon /></TrayCell>
          <Clock>11:51 AM<br />3/19/2024</Clock>
          <TrayCell $w={30}><Bell size={16} strokeWidth={1.5} /></TrayCell>
          <TrayCell $w={36} $ml={3}><Copilot /><CopilotBadge>PRE</CopilotBadge></TrayCell>
        </Tray>
      </Taskbar>
    </Shell>
  );
}
